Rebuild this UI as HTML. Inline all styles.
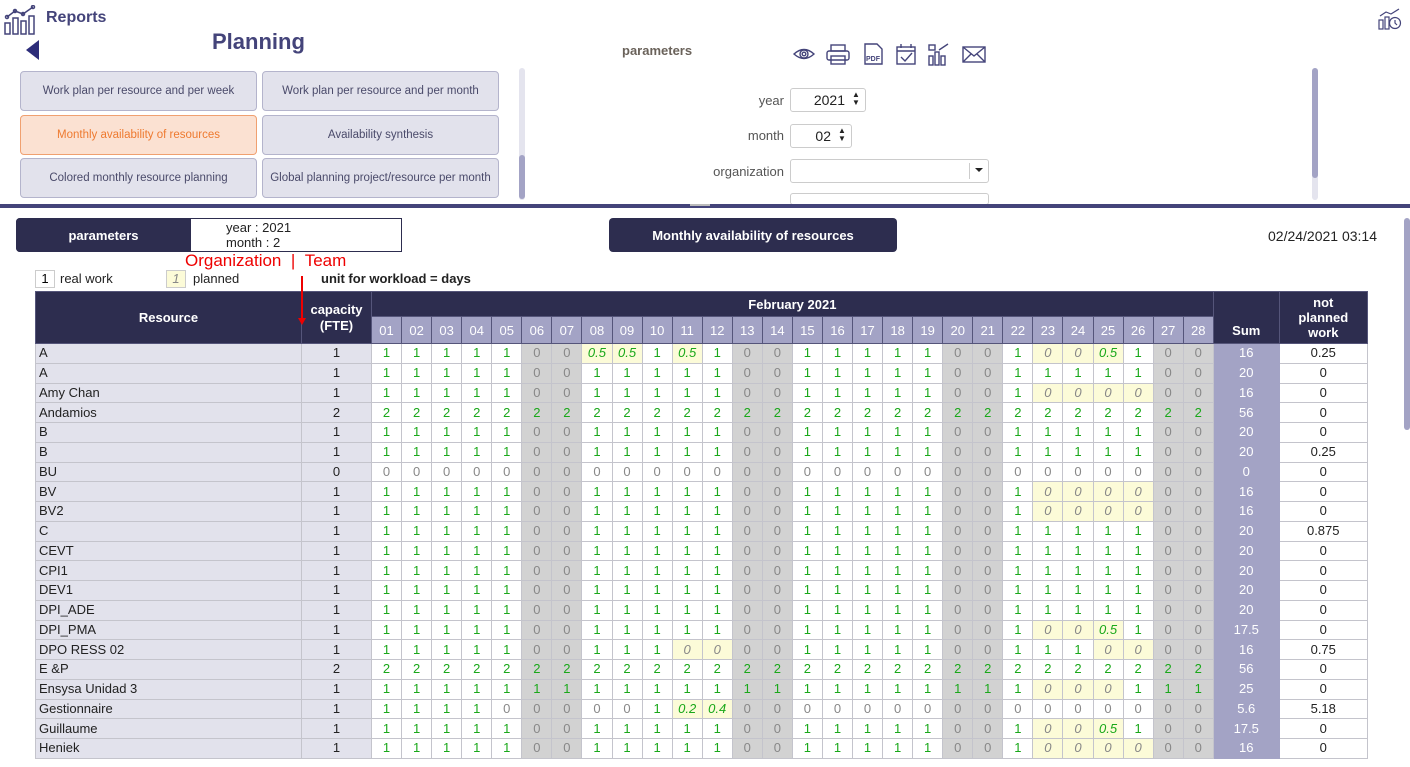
<!DOCTYPE html>
<html><head><meta charset="utf-8"><style>
*{box-sizing:border-box}
body{margin:0;width:1410px;height:767px;overflow:hidden;background:#fff;font-family:"Liberation Sans",Tahoma,sans-serif;position:relative}
.a{position:absolute}
.btn{position:absolute;width:237px;height:40px;background:#e2e2ec;border:1px solid #b4b4cc;border-radius:4px;font-size:11.5px;color:#4a4a6a;display:flex;align-items:center;justify-content:center}
.btn.on{background:#fbe1d2;border-color:#f0a070;color:#ee7a30}
.lbl{position:absolute;font-size:13px;color:#555;text-align:right;width:120px}
.inp{position:absolute;border:1px solid #ccc;border-radius:3px;height:24px;background:#fff;font-size:14px;text-align:right;padding-right:20px;line-height:22px;color:#222}
table{position:absolute;left:35px;top:291px;border-collapse:collapse;table-layout:fixed;font-size:13px}
td,th{border:1px solid #c4c4cc;padding:0;height:19.75px;text-align:center;white-space:nowrap;overflow:hidden}
th{background:#2d2d4f;color:#fff;font-weight:bold;font-size:13px;border-color:#55557a}
th.d{background:#a3a3c5;font-weight:normal;color:#fff;height:27px;font-size:13px}
td{color:#1aa81a;line-height:18px}
td.n{text-align:left;padding-left:3px;color:#222;background:#e2e2ec}
td.c{color:#222;background:#e2e2ec}
td.z{color:#888}
td.p{background:#fcfbd8;font-style:italic}
td.pz{background:#fcfbd8;font-style:italic;color:#888}
td.s{background:#a3a3c5;color:#fff;border-color:#a3a3c5}
td.np{color:#222}
.top{z-index:5}
</style></head><body>
<svg class="a" style="left:4px;top:5px" width="32" height="30" viewBox="0 0 32 30" fill="none" stroke="#44447a" stroke-width="1.5"><rect x="1" y="18" width="5" height="11"/><rect x="9" y="13" width="5" height="16"/><rect x="17" y="16" width="5" height="13"/><rect x="25" y="11" width="5" height="18"/><path d="M3 12 L11 6 L19 9 L29 2"/><circle cx="3" cy="12" r="1.5"/><circle cx="11" cy="6" r="1.5"/><circle cx="19" cy="9" r="1.5"/><circle cx="29" cy="2" r="1.5"/></svg>
<div class="a" style="left:46px;top:9px;font-size:16px;font-weight:bold;color:#44447a">Reports</div>
<div class="a" style="left:26px;top:40px;width:0;height:0;border-top:10px solid transparent;border-bottom:10px solid transparent;border-right:13px solid #2d2d7a"></div>
<div class="a" style="left:212px;top:29px;font-size:22px;font-weight:bold;color:#44447a">Planning</div>
<div class="btn" style="left:20px;top:71px">Work plan per resource and per week</div>
<div class="btn" style="left:262px;top:71px">Work plan per resource and per month</div>
<div class="btn on" style="left:20px;top:115px">Monthly availability of resources</div>
<div class="btn" style="left:262px;top:115px">Availability synthesis</div>
<div class="btn" style="left:20px;top:158px">Colored monthly resource planning</div>
<div class="btn" style="left:262px;top:158px">Global planning project/resource per month</div>
<div class="a" style="left:519px;top:68px;width:6px;height:132px;background:#e4e4ee;border-radius:3px"></div>
<div class="a" style="left:519px;top:155px;width:6px;height:44px;background:#a3a3c5;border-radius:3px"></div>
<div class="a" style="left:1312px;top:68px;width:6px;height:132px;background:#e4e4ee;border-radius:3px"></div>
<div class="a" style="left:1312px;top:68px;width:6px;height:110px;background:#a3a3c5;border-radius:3px"></div>
<div class="a" style="left:622px;top:43px;font-size:13px;font-weight:bold;color:#6a625a">parameters</div>
<svg class="a" style="left:792px;top:42px" width="196" height="24" viewBox="0 0 196 24" fill="none" stroke="#44447a" stroke-width="1.4">
<path d="M2 12 Q12 3 22 12 Q12 21 2 12Z"/><circle cx="12" cy="12" r="4"/><circle cx="12" cy="12" r="1.8"/>
<rect x="39" y="3" width="14" height="6"/><rect x="35" y="9" width="22" height="9" rx="2"/><rect x="39" y="14" width="14" height="8"/>
<path d="M73 2 H85 L90 7 V22 H73Z"/><text x="74" y="19" font-size="7" font-weight="bold" fill="#44447a" stroke="none" font-family="Liberation Sans">PDF</text>
<rect x="105" y="5" width="18" height="17"/><path d="M105 9 H123 M109 2 V6 M119 2 V6 M109 15 L113 19 L120 11"/>
<rect x="137" y="14" width="4" height="9"/><rect x="143" y="10" width="4" height="13"/><rect x="149" y="14" width="4" height="9"/><rect x="137" y="3" width="6" height="5"/><path d="M147 8 L156 2"/>
<rect x="171" y="5" width="22" height="15"/><path d="M171 5 L182 14 L193 5 M171 20 L179 12 M193 20 L185 12"/>
</svg>
<svg class="a" style="left:1378px;top:8px" width="24" height="22" viewBox="0 0 24 22" fill="none" stroke="#44447a" stroke-width="1.2"><rect x="1" y="12" width="4" height="9"/><rect x="7" y="9" width="4" height="12"/><circle cx="17" cy="15" r="5.5"/><path d="M17 12 V15 L19 17 M2 8 L8 4 L13 6 L21 1"/></svg>
<div class="lbl" style="left:664px;top:93px">year</div>
<div class="inp" style="left:790px;top:88px;width:76px">2021</div>
<div class="a" style="left:852px;top:91px;font-size:8px;line-height:8px;color:#222">▲<br>▼</div>
<div class="lbl" style="left:664px;top:128px">month</div>
<div class="inp" style="left:790px;top:124px;width:62px">02</div>
<div class="a" style="left:838px;top:127px;font-size:8px;line-height:8px;color:#222">▲<br>▼</div>
<div class="lbl" style="left:664px;top:164px">organization</div>
<div class="inp" style="left:790px;top:159px;width:199px"></div>
<div class="a" style="left:969px;top:163px;width:1px;height:16px;background:#ccc"></div>
<div class="a" style="left:975px;top:168px;border-left:4px solid transparent;border-right:4px solid transparent;border-top:4px solid #222"></div>
<div class="inp" style="left:790px;top:193px;width:199px;height:12px"></div>
<div class="a" style="left:0;top:204px;width:1410px;height:4px;background:#44447a"></div>
<div class="a" style="left:690px;top:204px;width:20px;height:2px;background:#bbb"></div>
<div class="a" style="left:16px;top:218px;width:386px;height:34px;border:1px solid #2d2d4f;border-radius:4px 0 0 4px;background:#fff"></div>
<div class="a" style="left:16px;top:218px;width:175px;height:34px;background:#2d2d4f;border-radius:4px 0 0 4px;color:#fff;font-weight:bold;font-size:13px;display:flex;align-items:center;justify-content:center">parameters</div>
<div class="a" style="left:226px;top:220px;font-size:13px;line-height:15px;color:#222">year : 2021<br>month : 2</div>
<div class="a" style="left:609px;top:218px;width:288px;height:34px;background:#2d2d4f;border-radius:4px;color:#fff;font-weight:bold;font-size:13px;display:flex;align-items:center;justify-content:center">Monthly availability of resources</div>
<div class="a" style="left:1268px;top:228px;font-size:14px;color:#222">02/24/2021 03:14</div>
<div class="a" style="left:1404px;top:218px;width:6px;height:212px;background:#a3a3c5;border-radius:3px"></div>
<div class="a" style="left:185px;top:251px;font-size:17px;color:#e00">Organization&nbsp;&nbsp;|&nbsp;&nbsp;Team</div>
<div class="a" style="left:35px;top:270px;width:20px;height:18px;border:1px solid #ccc;font-size:13px;text-align:center;line-height:16px">1</div>
<div class="a" style="left:60px;top:271px;font-size:13px;color:#222">real work</div>
<div class="a" style="left:166px;top:270px;width:20px;height:18px;border:1px solid #ccc;background:#fcfbd8;font-size:13px;font-style:italic;color:#888;text-align:center;line-height:16px">1</div>
<div class="a" style="left:193px;top:271px;font-size:13px;color:#222">planned</div>
<div class="a" style="left:321px;top:271px;font-size:13px;font-weight:bold;color:#222">unit for workload = days</div>
<table>
<colgroup><col style="width:266px"><col style="width:70px">
<col style="width:30.07px"><col style="width:30.07px"><col style="width:30.07px"><col style="width:30.07px"><col style="width:30.07px"><col style="width:30.07px;background:#d2d2d2"><col style="width:30.07px;background:#d2d2d2">
<col style="width:30.07px"><col style="width:30.07px"><col style="width:30.07px"><col style="width:30.07px"><col style="width:30.07px"><col style="width:30.07px;background:#d2d2d2"><col style="width:30.07px;background:#d2d2d2">
<col style="width:30.07px"><col style="width:30.07px"><col style="width:30.07px"><col style="width:30.07px"><col style="width:30.07px"><col style="width:30.07px;background:#d2d2d2"><col style="width:30.07px;background:#d2d2d2">
<col style="width:30.07px"><col style="width:30.07px"><col style="width:30.07px"><col style="width:30.07px"><col style="width:30.07px"><col style="width:30.07px;background:#d2d2d2"><col style="width:30.07px;background:#d2d2d2">
<col style="width:66px"><col style="width:88px"></colgroup>
<tr><th rowspan="2">Resource</th><th rowspan="2" style="line-height:16px">capacity<br>(FTE)</th><th colspan="28" style="height:25px">February 2021</th><th rowspan="2" style="vertical-align:bottom;padding-bottom:5px">Sum</th><th rowspan="2" style="line-height:15px">not<br>planned<br>work</th></tr>
<tr><th class="d">01</th><th class="d">02</th><th class="d">03</th><th class="d">04</th><th class="d">05</th><th class="d">06</th><th class="d">07</th><th class="d">08</th><th class="d">09</th><th class="d">10</th><th class="d">11</th><th class="d">12</th><th class="d">13</th><th class="d">14</th><th class="d">15</th><th class="d">16</th><th class="d">17</th><th class="d">18</th><th class="d">19</th><th class="d">20</th><th class="d">21</th><th class="d">22</th><th class="d">23</th><th class="d">24</th><th class="d">25</th><th class="d">26</th><th class="d">27</th><th class="d">28</th></tr>
<tr><td class="n">A</td><td class="c">1</td><td>1</td><td>1</td><td>1</td><td>1</td><td>1</td><td class="z">0</td><td class="z">0</td><td class="p">0.5</td><td class="p">0.5</td><td>1</td><td class="p">0.5</td><td>1</td><td class="z">0</td><td class="z">0</td><td>1</td><td>1</td><td>1</td><td>1</td><td>1</td><td class="z">0</td><td class="z">0</td><td>1</td><td class="pz">0</td><td class="pz">0</td><td class="p">0.5</td><td>1</td><td class="z">0</td><td class="z">0</td><td class="s">16</td><td class="np">0.25</td></tr>
<tr><td class="n">A</td><td class="c">1</td><td>1</td><td>1</td><td>1</td><td>1</td><td>1</td><td class="z">0</td><td class="z">0</td><td>1</td><td>1</td><td>1</td><td>1</td><td>1</td><td class="z">0</td><td class="z">0</td><td>1</td><td>1</td><td>1</td><td>1</td><td>1</td><td class="z">0</td><td class="z">0</td><td>1</td><td>1</td><td>1</td><td>1</td><td>1</td><td class="z">0</td><td class="z">0</td><td class="s">20</td><td class="np">0</td></tr>
<tr><td class="n">Amy Chan</td><td class="c">1</td><td>1</td><td>1</td><td>1</td><td>1</td><td>1</td><td class="z">0</td><td class="z">0</td><td>1</td><td>1</td><td>1</td><td>1</td><td>1</td><td class="z">0</td><td class="z">0</td><td>1</td><td>1</td><td>1</td><td>1</td><td>1</td><td class="z">0</td><td class="z">0</td><td>1</td><td class="pz">0</td><td class="pz">0</td><td class="pz">0</td><td class="pz">0</td><td class="z">0</td><td class="z">0</td><td class="s">16</td><td class="np">0</td></tr>
<tr><td class="n">Andamios</td><td class="c">2</td><td>2</td><td>2</td><td>2</td><td>2</td><td>2</td><td>2</td><td>2</td><td>2</td><td>2</td><td>2</td><td>2</td><td>2</td><td>2</td><td>2</td><td>2</td><td>2</td><td>2</td><td>2</td><td>2</td><td>2</td><td>2</td><td>2</td><td>2</td><td>2</td><td>2</td><td>2</td><td>2</td><td>2</td><td class="s">56</td><td class="np">0</td></tr>
<tr><td class="n">B</td><td class="c">1</td><td>1</td><td>1</td><td>1</td><td>1</td><td>1</td><td class="z">0</td><td class="z">0</td><td>1</td><td>1</td><td>1</td><td>1</td><td>1</td><td class="z">0</td><td class="z">0</td><td>1</td><td>1</td><td>1</td><td>1</td><td>1</td><td class="z">0</td><td class="z">0</td><td>1</td><td>1</td><td>1</td><td>1</td><td>1</td><td class="z">0</td><td class="z">0</td><td class="s">20</td><td class="np">0</td></tr>
<tr><td class="n">B</td><td class="c">1</td><td>1</td><td>1</td><td>1</td><td>1</td><td>1</td><td class="z">0</td><td class="z">0</td><td>1</td><td>1</td><td>1</td><td>1</td><td>1</td><td class="z">0</td><td class="z">0</td><td>1</td><td>1</td><td>1</td><td>1</td><td>1</td><td class="z">0</td><td class="z">0</td><td>1</td><td>1</td><td>1</td><td>1</td><td>1</td><td class="z">0</td><td class="z">0</td><td class="s">20</td><td class="np">0.25</td></tr>
<tr><td class="n">BU</td><td class="c">0</td><td class="z">0</td><td class="z">0</td><td class="z">0</td><td class="z">0</td><td class="z">0</td><td class="z">0</td><td class="z">0</td><td class="z">0</td><td class="z">0</td><td class="z">0</td><td class="z">0</td><td class="z">0</td><td class="z">0</td><td class="z">0</td><td class="z">0</td><td class="z">0</td><td class="z">0</td><td class="z">0</td><td class="z">0</td><td class="z">0</td><td class="z">0</td><td class="z">0</td><td class="z">0</td><td class="z">0</td><td class="z">0</td><td class="z">0</td><td class="z">0</td><td class="z">0</td><td class="s">0</td><td class="np">0</td></tr>
<tr><td class="n">BV</td><td class="c">1</td><td>1</td><td>1</td><td>1</td><td>1</td><td>1</td><td class="z">0</td><td class="z">0</td><td>1</td><td>1</td><td>1</td><td>1</td><td>1</td><td class="z">0</td><td class="z">0</td><td>1</td><td>1</td><td>1</td><td>1</td><td>1</td><td class="z">0</td><td class="z">0</td><td>1</td><td class="pz">0</td><td class="pz">0</td><td class="pz">0</td><td class="pz">0</td><td class="z">0</td><td class="z">0</td><td class="s">16</td><td class="np">0</td></tr>
<tr><td class="n">BV2</td><td class="c">1</td><td>1</td><td>1</td><td>1</td><td>1</td><td>1</td><td class="z">0</td><td class="z">0</td><td>1</td><td>1</td><td>1</td><td>1</td><td>1</td><td class="z">0</td><td class="z">0</td><td>1</td><td>1</td><td>1</td><td>1</td><td>1</td><td class="z">0</td><td class="z">0</td><td>1</td><td class="pz">0</td><td class="pz">0</td><td class="pz">0</td><td class="pz">0</td><td class="z">0</td><td class="z">0</td><td class="s">16</td><td class="np">0</td></tr>
<tr><td class="n">C</td><td class="c">1</td><td>1</td><td>1</td><td>1</td><td>1</td><td>1</td><td class="z">0</td><td class="z">0</td><td>1</td><td>1</td><td>1</td><td>1</td><td>1</td><td class="z">0</td><td class="z">0</td><td>1</td><td>1</td><td>1</td><td>1</td><td>1</td><td class="z">0</td><td class="z">0</td><td>1</td><td>1</td><td>1</td><td>1</td><td>1</td><td class="z">0</td><td class="z">0</td><td class="s">20</td><td class="np">0.875</td></tr>
<tr><td class="n">CEVT</td><td class="c">1</td><td>1</td><td>1</td><td>1</td><td>1</td><td>1</td><td class="z">0</td><td class="z">0</td><td>1</td><td>1</td><td>1</td><td>1</td><td>1</td><td class="z">0</td><td class="z">0</td><td>1</td><td>1</td><td>1</td><td>1</td><td>1</td><td class="z">0</td><td class="z">0</td><td>1</td><td>1</td><td>1</td><td>1</td><td>1</td><td class="z">0</td><td class="z">0</td><td class="s">20</td><td class="np">0</td></tr>
<tr><td class="n">CPI1</td><td class="c">1</td><td>1</td><td>1</td><td>1</td><td>1</td><td>1</td><td class="z">0</td><td class="z">0</td><td>1</td><td>1</td><td>1</td><td>1</td><td>1</td><td class="z">0</td><td class="z">0</td><td>1</td><td>1</td><td>1</td><td>1</td><td>1</td><td class="z">0</td><td class="z">0</td><td>1</td><td>1</td><td>1</td><td>1</td><td>1</td><td class="z">0</td><td class="z">0</td><td class="s">20</td><td class="np">0</td></tr>
<tr><td class="n">DEV1</td><td class="c">1</td><td>1</td><td>1</td><td>1</td><td>1</td><td>1</td><td class="z">0</td><td class="z">0</td><td>1</td><td>1</td><td>1</td><td>1</td><td>1</td><td class="z">0</td><td class="z">0</td><td>1</td><td>1</td><td>1</td><td>1</td><td>1</td><td class="z">0</td><td class="z">0</td><td>1</td><td>1</td><td>1</td><td>1</td><td>1</td><td class="z">0</td><td class="z">0</td><td class="s">20</td><td class="np">0</td></tr>
<tr><td class="n">DPI_ADE</td><td class="c">1</td><td>1</td><td>1</td><td>1</td><td>1</td><td>1</td><td class="z">0</td><td class="z">0</td><td>1</td><td>1</td><td>1</td><td>1</td><td>1</td><td class="z">0</td><td class="z">0</td><td>1</td><td>1</td><td>1</td><td>1</td><td>1</td><td class="z">0</td><td class="z">0</td><td>1</td><td>1</td><td>1</td><td>1</td><td>1</td><td class="z">0</td><td class="z">0</td><td class="s">20</td><td class="np">0</td></tr>
<tr><td class="n">DPI_PMA</td><td class="c">1</td><td>1</td><td>1</td><td>1</td><td>1</td><td>1</td><td class="z">0</td><td class="z">0</td><td>1</td><td>1</td><td>1</td><td>1</td><td>1</td><td class="z">0</td><td class="z">0</td><td>1</td><td>1</td><td>1</td><td>1</td><td>1</td><td class="z">0</td><td class="z">0</td><td>1</td><td class="pz">0</td><td class="pz">0</td><td class="p">0.5</td><td>1</td><td class="z">0</td><td class="z">0</td><td class="s">17.5</td><td class="np">0</td></tr>
<tr><td class="n">DPO RESS 02</td><td class="c">1</td><td>1</td><td>1</td><td>1</td><td>1</td><td>1</td><td class="z">0</td><td class="z">0</td><td>1</td><td>1</td><td>1</td><td class="pz">0</td><td class="pz">0</td><td class="z">0</td><td class="z">0</td><td>1</td><td>1</td><td>1</td><td>1</td><td>1</td><td class="z">0</td><td class="z">0</td><td>1</td><td>1</td><td>1</td><td class="pz">0</td><td class="pz">0</td><td class="z">0</td><td class="z">0</td><td class="s">16</td><td class="np">0.75</td></tr>
<tr><td class="n">E &amp;P</td><td class="c">2</td><td>2</td><td>2</td><td>2</td><td>2</td><td>2</td><td>2</td><td>2</td><td>2</td><td>2</td><td>2</td><td>2</td><td>2</td><td>2</td><td>2</td><td>2</td><td>2</td><td>2</td><td>2</td><td>2</td><td>2</td><td>2</td><td>2</td><td>2</td><td>2</td><td>2</td><td>2</td><td>2</td><td>2</td><td class="s">56</td><td class="np">0</td></tr>
<tr><td class="n">Ensysa Unidad 3</td><td class="c">1</td><td>1</td><td>1</td><td>1</td><td>1</td><td>1</td><td>1</td><td>1</td><td>1</td><td>1</td><td>1</td><td>1</td><td>1</td><td>1</td><td>1</td><td>1</td><td>1</td><td>1</td><td>1</td><td>1</td><td>1</td><td>1</td><td>1</td><td class="pz">0</td><td class="pz">0</td><td class="pz">0</td><td>1</td><td>1</td><td>1</td><td class="s">25</td><td class="np">0</td></tr>
<tr><td class="n">Gestionnaire</td><td class="c">1</td><td>1</td><td>1</td><td>1</td><td>1</td><td class="z">0</td><td class="z">0</td><td class="z">0</td><td class="z">0</td><td class="z">0</td><td>1</td><td class="p">0.2</td><td class="p">0.4</td><td class="z">0</td><td class="z">0</td><td class="z">0</td><td class="z">0</td><td class="z">0</td><td class="z">0</td><td class="z">0</td><td class="z">0</td><td class="z">0</td><td class="z">0</td><td class="z">0</td><td class="z">0</td><td class="z">0</td><td class="z">0</td><td class="z">0</td><td class="z">0</td><td class="s">5.6</td><td class="np">5.18</td></tr>
<tr><td class="n">Guillaume</td><td class="c">1</td><td>1</td><td>1</td><td>1</td><td>1</td><td>1</td><td class="z">0</td><td class="z">0</td><td>1</td><td>1</td><td>1</td><td>1</td><td>1</td><td class="z">0</td><td class="z">0</td><td>1</td><td>1</td><td>1</td><td>1</td><td>1</td><td class="z">0</td><td class="z">0</td><td>1</td><td class="pz">0</td><td class="pz">0</td><td class="p">0.5</td><td>1</td><td class="z">0</td><td class="z">0</td><td class="s">17.5</td><td class="np">0</td></tr>
<tr><td class="n">Heniek</td><td class="c">1</td><td>1</td><td>1</td><td>1</td><td>1</td><td>1</td><td class="z">0</td><td class="z">0</td><td>1</td><td>1</td><td>1</td><td>1</td><td>1</td><td class="z">0</td><td class="z">0</td><td>1</td><td>1</td><td>1</td><td>1</td><td>1</td><td class="z">0</td><td class="z">0</td><td>1</td><td class="pz">0</td><td class="pz">0</td><td class="pz">0</td><td class="pz">0</td><td class="z">0</td><td class="z">0</td><td class="s">16</td><td class="np">0</td></tr>
</table>
<div class="a top" style="left:301px;top:276px;width:2px;height:44px;background:#e00"></div>
<div class="a top" style="left:298px;top:318px;border-left:4px solid transparent;border-right:4px solid transparent;border-top:7px solid #e00"></div>
</body></html>
